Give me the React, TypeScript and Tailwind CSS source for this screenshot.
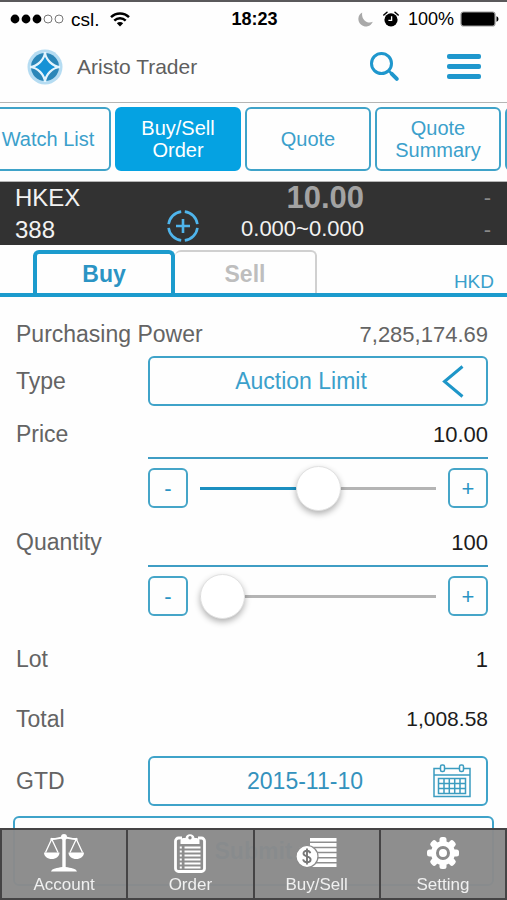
import { useState } from 'react'

const sections = ['Watch List', 'Buy/Sell Order', 'Quote', 'Quote Summary']

function StatusBar() {
  return (
    <div className="grid h-9 grid-cols-3 items-center border-t-2 border-[#5a595b] pr-2 pl-[10px] text-lg leading-none text-black">
      <div className="flex items-center gap-[10px]">
        <div className="flex items-center">
          <svg width="54" height="10" viewBox="0 0 54 10" aria-hidden="true">
            <circle cx="5" cy="5" r="4.4" />
            <circle cx="16" cy="5" r="4.4" />
            <circle cx="27" cy="5" r="4.4" />
            <circle cx="38" cy="5" r="4" fill="none" stroke="#777" />
            <circle cx="49" cy="5" r="4" fill="none" stroke="#777" />
          </svg>
          <span className="ml-[7px] text-[19px]">csl.</span>
        </div>
        <svg width="20" height="15" viewBox="0 0 20 15" fill="none" stroke="#000" strokeWidth="2.4" aria-hidden="true">
          <path d="M1 5.2a12.8 12.8 0 0 1 18 0" />
          <path d="M4.3 8.7a8 8 0 0 1 11.4 0" />
          <path d="M10 14.5 6.8 11.3a4.6 4.6 0 0 1 6.4 0z" fill="#000" stroke="none" />
        </svg>
      </div>
      <time className="text-center font-bold">18:23</time>
      <div className="flex items-center justify-end">
        <svg width="15" height="15" viewBox="0 0 15 15" fill="#a9a9a9" aria-hidden="true">
          <path d="M4.2.4A7.500 7.500 0 1 0 14.800 9.800C9.500 12.200 3 8 4.200.4z" />
        </svg>
        <svg className="ml-[10px]" width="16" height="16" viewBox="0 0 16 16" aria-hidden="true">
          <circle cx="8" cy="8.8" r="6.6" />
          <path d="M.8 4 4 1.2M15.2 4 12 1.2" stroke="#000" strokeWidth="1.5" strokeLinecap="round" />
          <path d="M8.6 5.2v4.2H5.4" stroke="#fff" strokeWidth="1.3" fill="none" />
        </svg>
        <span className="ml-[9px]">100%</span>
        <svg className="ml-[6px]" width="39" height="16" viewBox="0 0 39 16" aria-hidden="true">
          <rect x="1" y="1" width="34" height="14" rx="2.5" stroke="#999" strokeWidth="1.2" />
          <path d="M36.5 5.2c2.6.8 2.6 4.8 0 5.6z" />
        </svg>
      </div>
    </div>
  )
}

function Logo() {
  return (
    <svg width="36" height="36" viewBox="0 0 36 36" aria-hidden="true">
      <circle cx="18" cy="18" r="17.5" fill="#b5dcf2" />
      <circle cx="18" cy="18" r="14" fill="#2a86b8" />
      <path d="M18 3C18.500 10.500 25.500 17.500 33 18 25.500 18.500 18.500 25.500 18 33 17.500 25.500 10.500 18.500 3 18 10.500 17.500 17.500 10.500 18 3z" fill="#1592d6" stroke="#e3f4fd" strokeWidth="2.200" />
      <path d="M18 8.500C19.500 13 23 16.500 27.500 18 23 19.500 19.500 23 18 27.500 16.500 23 13 19.500 8.500 18 13 16.500 16.500 13 18 8.500z" fill="#1592d6" />
    </svg>
  )
}

function Header() {
  return (
    <header className="flex h-[67px] items-center border-b border-[#b5b5b5] pr-[26px] pb-[5px] pl-[27px]">
      <Logo />
      <h1 className="ml-[14px] text-[21px] text-[#5f5f5f]">Aristo Trader</h1>
      <button type="button" aria-label="Search" className="ml-auto">
        <svg width="31" height="31" viewBox="0 0 31 31" fill="none" stroke="#1f97cd" strokeLinecap="round" aria-hidden="true">
          <circle cx="12.500" cy="12.500" r="10" strokeWidth="3" />
          <path d="M19.800 19.800 22.500 22.500" strokeWidth="2.500" />
          <path d="M22.800 22.800 27.800 27.800" strokeWidth="4" />
        </svg>
      </button>
      <button type="button" aria-label="Menu" className="ml-[47px] flex w-[34px] flex-col gap-[5px]">
        <span className="h-[5px] rounded-xs bg-[#1f97cd]" />
        <span className="h-[5px] rounded-xs bg-[#1f97cd]" />
        <span className="h-[5px] rounded-xs bg-[#1f97cd]" />
      </button>
    </header>
  )
}

function SectionNav() {
  const [active, setActive] = useState('Buy/Sell Order')

  return (
    <nav className="flex justify-start gap-1 overflow-hidden border-b border-[#b5b5b5] pt-1 pb-[10px]">
      {sections.map((name) => (
        <button
          key={name}
          type="button"
          onClick={() => setActive(name)}
          className={`h-[64px] w-[126px] shrink-0 rounded-md border-2 px-4 text-xl leading-[22px] first:-ml-[15px] first:px-0 ${
            active === name ? 'border-[#05a2e2] bg-[#05a2e2] text-white' : 'border-[#3fa3c9] text-[#3ba0cb]'
          }`}
        >
          {name}
        </button>
      ))}
      <button type="button" aria-label="More" className="h-[64px] w-[126px] shrink-0 rounded-md border-2 border-[#3fa3c9]" />
    </nav>
  )
}

function StockBar() {
  return (
    <section className="grid h-[63px] grid-cols-[183px_181px_1fr] bg-[#323232] text-[#f2f2f2]">
      <div className="flex flex-col pl-[15px] text-2xl leading-8">
        <span>HKEX</span>
        <span>388</span>
      </div>
      <div className="relative flex flex-col items-end">
        <strong className="text-[31px] leading-8 text-[#a3a3a3]">10.00</strong>
        <span className="text-[22px] leading-[30px]">0.000~0.000</span>
        <button type="button" aria-label="Locate stock" className="absolute bottom-1 -left-4">
          <svg width="32" height="32" viewBox="0 0 32 32" fill="none" stroke="#4fb5ec" strokeWidth="2.600" aria-hidden="true">
            <path d="M17.800 1.600a14.500 14.500 0 0 1 12.600 12.600M30.400 17.800a14.500 14.500 0 0 1-12.600 12.600M14.200 30.400A14.500 14.500 0 0 1 1.600 17.800M1.600 14.200A14.500 14.500 0 0 1 14.200 1.600" />
            <path d="M16 9v14M9 16h14" />
          </svg>
        </button>
      </div>
      <div className="flex flex-col pr-4 text-right text-[22px] leading-8 text-[#888]">
        <span>-</span>
        <span>-</span>
      </div>
    </section>
  )
}

function SideTabs() {
  return (
    <div className="flex h-[52px] items-end border-b-4 border-[#1c9bcd] pr-[13px] pl-[33px]">
      <button type="button" className="h-[43px] w-[142px] rounded-t-md border-4 border-b-0 border-[#1c9bcd] pt-[2px] text-[23px] font-bold text-[#2b94c4]">
        Buy
      </button>
      <button type="button" className="h-[43px] w-[142px] rounded-t-md border-2 border-b-0 border-l-0 border-[#d0d0d0] pt-1 text-[23px] font-bold text-[#bebebe]">
        Sell
      </button>
      <span className="ml-auto text-[19px] leading-[22px] text-[#3ba0cb]">HKD</span>
    </div>
  )
}

const stepButton = 'size-10 shrink-0 rounded-md border-2 border-[#45a5c8] pt-[2px] text-[22px] leading-none text-[#2b94c4]'

function Stepper({ label, initial }: { label: string; initial: number }) {
  const [level, setLevel] = useState(initial)

  return (
    <div className="mt-2 flex h-[42px] items-center gap-3 pl-[132px]">
      <button type="button" aria-label={`Decrease ${label}`} className={stepButton} onClick={() => setLevel(Math.max(0, level - 1))}>
        -
      </button>
      <input
        type="range"
        min={0}
        max={100}
        value={level}
        aria-label={label}
        onChange={(e) => setLevel(Number(e.target.value))}
        className="h-[46px] min-w-0 flex-1 appearance-none bg-[length:100%_3px] bg-center bg-no-repeat [&::-webkit-slider-thumb]:size-[45px] [&::-webkit-slider-thumb]:appearance-none [&::-webkit-slider-thumb]:rounded-full [&::-webkit-slider-thumb]:border [&::-webkit-slider-thumb]:border-[#e2e2e2] [&::-webkit-slider-thumb]:bg-white [&::-webkit-slider-thumb]:shadow-[0_3px_6px_rgba(0,0,0,0.3)]"
        style={{ backgroundImage: `linear-gradient(to right, #1b8fc0 ${level}%, #b4b4b4 ${level}%)` }}
      />
      <button type="button" aria-label={`Increase ${label}`} className={stepButton} onClick={() => setLevel(Math.min(100, level + 1))}>
        +
      </button>
    </div>
  )
}

function NumberField({ id, label, value }: { id: string; label: string; value: string }) {
  return (
    <div className="flex h-[49px] items-stretch">
      <label htmlFor={id} className="flex w-[132px] shrink-0 items-center">
        {label}
      </label>
      <input
        id={id}
        type="text"
        inputMode="decimal"
        defaultValue={value}
        className="min-w-0 flex-1 border-b-2 border-[#3f9dc4] pt-[2px] text-right text-[22px] text-[#1c1c1c] outline-none"
      />
    </div>
  )
}

function CalendarIcon() {
  return (
    <svg width="38" height="34" viewBox="0 0 38 34" fill="none" stroke="#3b9cc0" strokeWidth="1.500" aria-hidden="true">
      <path d="M7.500 4.500H1v28h36v-28h-6.500M11.500 4.500h15M1 11h36" />
      <rect x="7.500" y="1" width="4" height="6.500" rx="1.500" />
      <rect x="26.500" y="1" width="4" height="6.500" rx="1.500" />
      <path d="M5.500 14.500h27v15h-27zM5.500 19.500h27M5.500 24.500h27M11 14.500v15M16.300 14.500v15M21.700 14.500v15M27 14.500v15" />
    </svg>
  )
}

function OrderForm() {
  return (
    <form className="pt-[15px] text-[23px] text-[#646464]" onSubmit={(e) => e.preventDefault()}>
      <div className="pr-[19px] pl-4">
        <div className="flex h-11 items-center justify-between">
          <span>Purchasing Power</span>
          <span className="text-[22px]">7,285,174.69</span>
        </div>
        <div className="flex h-[50px] items-center">
          <label htmlFor="type" className="w-[132px] shrink-0">
            Type
          </label>
          <div className="relative flex-1">
            <select id="type" className="h-[50px] w-full appearance-none rounded-md border-2 border-[#3fa3c9] pr-[34px] text-center text-[#3ba0cb] [text-align-last:center]">
              <option>Auction Limit</option>
              <option>Enhanced Limit</option>
            </select>
            <svg className="pointer-events-none absolute top-[9px] right-6" width="22" height="33" viewBox="0 0 22 33" fill="none" stroke="#1e96c8" strokeWidth="3" aria-hidden="true">
              <path d="M20.500 1.500 2.500 16.500l18 15" />
            </svg>
          </div>
        </div>
        <div className="mt-1">
          <NumberField id="price" label="Price" value="10.00" />
          <Stepper label="Price level" initial={50} />
        </div>
        <div className="mt-[9px]">
          <NumberField id="quantity" label="Quantity" value="100" />
          <Stepper label="Quantity level" initial={0} />
        </div>
        <div className="mt-3 flex h-[60px] items-center justify-between">
          <span>Lot</span>
          <span className="text-[22px] text-[#1c1c1c]">1</span>
        </div>
        <div className="flex h-[60px] items-center justify-between">
          <span>Total</span>
          <span className="text-[21px] text-[#1c1c1c]">1,008.58</span>
        </div>
        <div className="mt-[7px] flex h-[50px] items-center">
          <label htmlFor="gtd" className="w-[132px] shrink-0">
            GTD
          </label>
          <button id="gtd" type="button" className="flex h-[50px] flex-1 items-center rounded-md border-2 border-[#3fa3c9] pr-[15px] pl-[27px] text-[#3492bd]">
            <span className="flex-1">2015-11-10</span>
            <CalendarIcon />
          </button>
        </div>
      </div>
      <div className="mt-[10px] px-[13px]">
        <button type="submit" className="h-[70px] w-full rounded-md border-2 border-[#3fa3c9] font-bold text-[#3ba0cb]">
          Submit
        </button>
      </div>
    </form>
  )
}

function ScalesIcon() {
  return (
    <svg width="40" height="38" viewBox="0 0 40 38" fill="#fff" aria-hidden="true">
      <circle cx="20" cy="3" r="3" />
      <path d="M18.300 4h3.400v29h-3.400zM7 37.500c1-3.200 6-3.500 11.300-4.500h3.400c5.300 1 10.300 1.300 11.300 4.500z" />
      <path d="M0 18.500h15.500c0 4-3.500 6.500-7.700 6.500S0 22.500 0 18.500zM24.500 18.500H40c0 4-3.500 6.500-7.700 6.500s-7.800-2.500-7.800-6.500z" />
      <path d="M1.500 18.500 7.700 5 14 18.500M26 18.500 32.300 5l6.200 13.500" fill="none" stroke="#fff" strokeWidth="1.300" />
      <path d="M6.500 4.800C12 5.800 14 3.500 20 3.500s8 2.300 13.500 1.300" fill="none" stroke="#fff" strokeWidth="1.800" />
    </svg>
  )
}

function ClipboardIcon() {
  return (
    <svg width="32" height="40" viewBox="0 0 32 40" fill="none" stroke="#fff" aria-hidden="true">
      <path d="M8 5H4.500A3 3 0 0 0 1.500 8v27.500a3 3 0 0 0 3 3h23a3 3 0 0 0 3-3V8a3 3 0 0 0-3-3H24" strokeWidth="2.800" />
      <path d="M6.500 11V7.500c0-2 1.500-2.500 5-2.500a4.600 4.600 0 0 1 9 0c3.500 0 5 .5 5 2.500V11z" fill="#fff" stroke="none" />
      <circle cx="16" cy="4.800" r="1.700" fill="#8b8b8b" stroke="none" />
      <path d="M10.500 14.500h16M10.500 18.500h16M10.500 22.500h16M10.500 26.500h16M10.500 30.500h16M10.500 34.500h16" strokeWidth="2" />
      <path d="M5.800 14.500h2M5.800 18.500h2M5.800 22.500h2M5.800 26.500h2M5.800 30.500h2M5.800 34.500h2" strokeWidth="2" />
    </svg>
  )
}

function MoneyIcon() {
  return (
    <svg width="41" height="30" viewBox="0 0 41 30" aria-hidden="true">
      <path d="M14 1.800h26.500M14 6.900h26.500M14 12h26.500M14 17.100h26.500M14 22.200h26.500M14 27.300h26.500" stroke="#fff" strokeWidth="3.600" />
      <circle cx="11" cy="18.500" r="11" fill="#fff" stroke="#8b8b8b" strokeWidth="1.200" />
      <path d="M14.300 15.200c-.5-1.700-1.800-2.400-3.400-2.400-2 0-3.400 1-3.400 2.700 0 3.800 7.100 2 7.100 6 0 1.700-1.500 2.800-3.600 2.800s-3.500-1-3.900-2.900M11 10.500v16" fill="none" stroke="#777" strokeWidth="1.900" />
    </svg>
  )
}

function GearIcon() {
  return (
    <svg width="34" height="32" viewBox="-17 -16 34 32" fill="#fff" aria-hidden="true">
      {[0, 45, 90, 135].map((angle) => (
        <rect key={angle} x="-3.500" y="-16" width="7" height="32" rx="2.500" transform={`rotate(${angle})`} />
      ))}
      <circle r="12" />
      <circle r="5.500" fill="none" stroke="#8b8b8b" strokeWidth="3" />
    </svg>
  )
}

const menu = [
  { label: 'Account', icon: <ScalesIcon /> },
  { label: 'Order', icon: <ClipboardIcon /> },
  { label: 'Buy/Sell', icon: <MoneyIcon /> },
  { label: 'Setting', icon: <GearIcon /> },
]

function BottomBar() {
  return (
    <nav className="fixed inset-x-0 bottom-0 grid h-[72px] grid-cols-4 border-y-2 border-r-2 border-[#454445] bg-[#8a8a8a]/97">
      {menu.map((item) => (
        <a key={item.label} href="#" className="flex flex-col items-center border-l-2 border-[#454445] pt-[2px] text-[17px] leading-[22px] text-[#f0f0f0]">
          <span className="flex h-[42px] items-center">{item.icon}</span>
          {item.label}
        </a>
      ))}
    </nav>
  )
}

export default function App() {
  return (
    <div className="min-h-screen bg-[#fefefe] font-['Liberation_Sans',Arial,sans-serif]">
      <StatusBar />
      <Header />
      <SectionNav />
      <StockBar />
      <SideTabs />
      <main className="overflow-hidden pb-[14px]">
        <OrderForm />
      </main>
      <BottomBar />
    </div>
  )
}
